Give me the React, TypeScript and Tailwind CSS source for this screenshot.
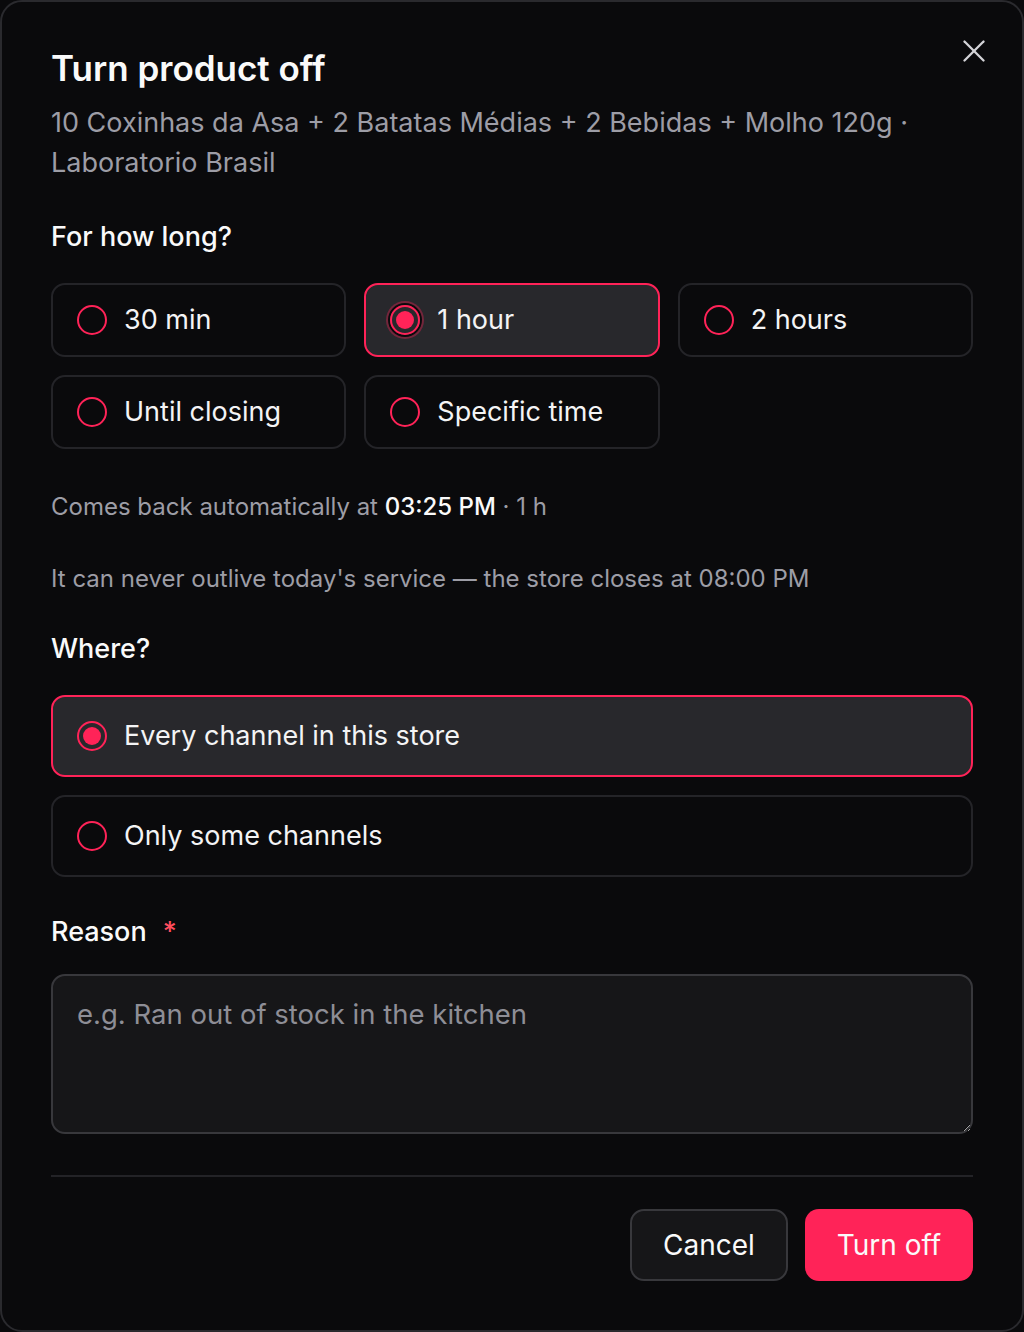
import { X } from "lucide-react";

type Opt = { label: string; selected?: boolean; focus?: boolean };

const DURATIONS: Opt[] = [
  { label: "30 min" },
  { label: "1 hour", selected: true, focus: true },
  { label: "2 hours" },
  { label: "Until closing" },
  { label: "Specific time" },
];

const WHERE: Opt[] = [
  { label: "Every channel in this store", selected: true },
  { label: "Only some channels" },
];

function Radio({ selected, focus }: { selected?: boolean; focus?: boolean }) {
  return (
    <span
      className={
        "relative flex h-[30px] w-[30px] shrink-0 items-center justify-center rounded-full border-2 border-[#ff2358]" +
        (focus ? " shadow-[0_0_0_2px_#0a0a0c,0_0_0_4px_rgba(255,35,88,0.35)]" : "")
      }
    >
      {selected && <span className="h-[18px] w-[18px] rounded-full bg-[#ff2358]" />}
    </span>
  );
}

function Option({ opt, tall }: { opt: Opt; tall?: boolean }) {
  return (
    <div
      className={
        "flex items-center gap-[17px] rounded-[14px] border-2 px-[24px] " +
        (tall ? "h-[82px] " : "h-[74px] ") +
        (opt.selected
          ? "border-[#ff2358] bg-[#28282c]"
          : "border-[#242428] bg-[#0a0a0c]")
      }
    >
      <Radio selected={opt.selected} focus={opt.focus} />
      <span className="text-[27px] text-[#f4f4f5]">{opt.label}</span>
    </div>
  );
}

export default function App() {
  return (
    <div
      className="h-[1332px] w-[1024px] bg-[#0a0a0c]"
      style={{ fontFamily: "Inter, 'Noto Sans', sans-serif" }}
    >
      <div className="relative flex h-full flex-col rounded-[22px] border-2 border-[#2a2a2e] bg-[#0a0a0c] px-[49px] pt-[42px]">
        <button className="absolute right-[29px] top-[30px] text-[#d4d4d8]">
          <X size={38} strokeWidth={1.5} />
        </button>

        <h1 className="text-[35px] font-semibold leading-[48px] text-[#fafafa]">
          Turn product off
        </h1>
        <p className="mt-[11px] text-[27px] leading-[40px] text-[#9d9da6]">
          10 Coxinhas da Asa + 2 Batatas Médias + 2 Bebidas + Molho 120g ·
          Laboratorio Brasil
        </p>

        <h2 className="mt-[36px] text-[27px] font-medium leading-[36px] text-[#fafafa]">
          For how long?
        </h2>
        <div className="mt-[28px] grid grid-cols-3 gap-[18px]">
          {DURATIONS.map((o) => (
            <Option key={o.label} opt={o} />
          ))}
        </div>

        <p className="mt-[43px] text-[24px] leading-[30px] text-[#9d9da6]">
          Comes back automatically at{" "}
          <span className="font-medium text-[#fafafa]">03:25 PM</span> · 1 h
        </p>
        <p className="mt-[42px] text-[24px] leading-[30px] text-[#9d9da6]">
          It can never outlive today's service — the store closes at 08:00 PM
        </p>

        <h2 className="mt-[37px] text-[27px] font-medium leading-[36px] text-[#fafafa]">
          Where?
        </h2>
        <div className="mt-[28px] flex flex-col gap-[18px]">
          {WHERE.map((o) => (
            <Option key={o.label} opt={o} tall />
          ))}
        </div>

        <label className="mt-[37px] flex items-center gap-[16px] text-[27px] font-medium leading-[36px] text-[#fafafa]">
          Reason <span className="text-[#ff4d5e]">*</span>
        </label>
        <textarea
          className="mt-[24px] h-[160px] w-full resize-y rounded-[14px] border-2 border-[#38383c] bg-[#161618] px-[24px] py-[20px] text-[27.5px] leading-[36px] text-[#fafafa] outline-none placeholder:text-[#8e8e96]"
          placeholder="e.g. Ran out of stock in the kitchen"
        />

        <div className="mt-[41px] h-[2px] w-full bg-[#232327]" />

        <div className="mt-[32px] flex justify-end gap-[17px]">
          <button className="h-[72px] w-[158px] rounded-[14px] border-2 border-[#38383c] bg-[#161618] text-[28px] text-[#fafafa]">
            Cancel
          </button>
          <button className="h-[72px] w-[168px] rounded-[14px] bg-[#ff2358] text-[28px] text-[#fafafa]">
            Turn off
          </button>
        </div>
      </div>
    </div>
  );
}
